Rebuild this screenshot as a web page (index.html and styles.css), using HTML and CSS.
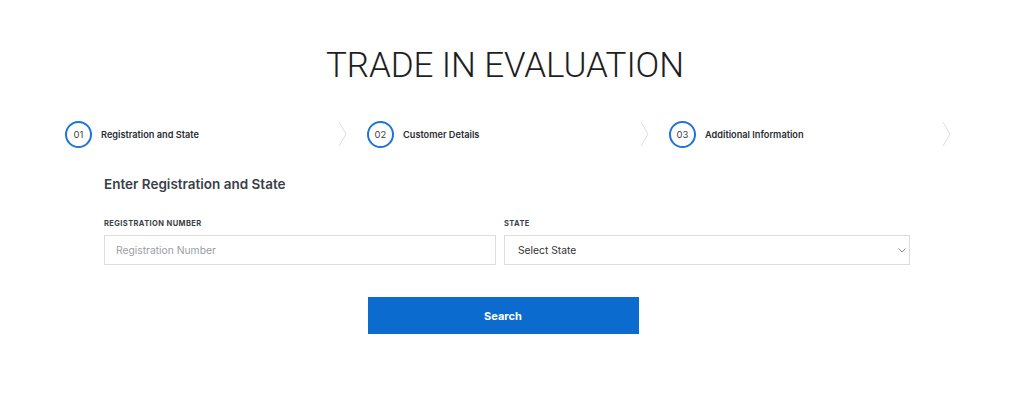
FILE: index.html
```html
<!DOCTYPE html>
<html lang="en">
<head>
    <meta charset="UTF-8">
    <meta name="viewport" content="width=device-width, initial-scale=1.0">
    <title>Trade In Evaluation</title>
    <link rel="stylesheet" href="styles.css">
</head>
<body>
    <div class="page">
        <h1 class="title">TRADE IN EVALUATION</h1>

        <div class="steps">
            <div class="step">
                <span class="step-num">01</span>
                <span class="step-label">Registration and State</span>
                <svg class="chevron" width="9" height="26" viewBox="0 0 9 26"><path d="M1 1 L8 13 L1 25" fill="none" stroke="#dedede" stroke-width="1"/></svg>
            </div>
            <div class="step">
                <span class="step-num">02</span>
                <span class="step-label">Customer Details</span>
                <svg class="chevron" width="9" height="26" viewBox="0 0 9 26"><path d="M1 1 L8 13 L1 25" fill="none" stroke="#dedede" stroke-width="1"/></svg>
            </div>
            <div class="step">
                <span class="step-num">03</span>
                <span class="step-label">Additional Information</span>
                <svg class="chevron" width="9" height="26" viewBox="0 0 9 26"><path d="M1 1 L8 13 L1 25" fill="none" stroke="#dedede" stroke-width="1"/></svg>
            </div>
        </div>

        <form class="form" onsubmit="return false">
            <h3 class="form-title">Enter Registration and State</h3>
            <div class="fields">
                <div class="field">
                    <label for="rego">REGISTRATION NUMBER</label>
                    <input id="rego" type="text" placeholder="Registration Number">
                </div>
                <div class="field">
                    <label for="state">STATE</label>
                    <div class="select-wrap">
                        <select id="state">
                            <option>Select State</option>
                            <option>ACT</option>
                            <option>NSW</option>
                            <option>NT</option>
                            <option>QLD</option>
                            <option>SA</option>
                            <option>TAS</option>
                            <option>VIC</option>
                            <option>WA</option>
                        </select>
                        <svg class="caret" width="8" height="5" viewBox="0 0 8 5"><path d="M0.5 0.5 L4 4 L7.5 0.5" fill="none" stroke="#888" stroke-width="1"/></svg>
                    </div>
                </div>
            </div>
            <div class="actions">
                <button type="submit" class="btn">Search</button>
            </div>
        </form>
    </div>
</body>
</html>
```

FILE: styles.css
```css
body {
    margin: 0;
    font-family: Inter, "Liberation Sans", Arial, sans-serif;
    color: #2b2f36;
    background: #fff;
}
.page {
    width: 906px;
    margin-left: 52px;
}
.title {
    margin: 0;
    padding-top: 45px;
    text-align: center;
    font-family: Roboto, Inter, sans-serif;
    font-weight: 300;
    font-size: 35px;
    line-height: 41px;
    letter-spacing: -0.1px;
    color: #1e1e1e;
}
.steps {
    display: grid;
    grid-template-columns: repeat(3, 1fr);
    margin-top: 34px;
}
.step {
    display: flex;
    align-items: center;
    height: 28px;
    padding: 0 7px 0 13px;
}
.step-num {
    box-sizing: border-box;
    width: 27px;
    height: 27px;
    border: 2px solid #1f74d6;
    border-radius: 50%;
    display: flex;
    align-items: center;
    justify-content: center;
    font-size: 9.5px;
    color: #444;
}
.step-label {
    margin-left: 9px;
    font-size: 9.2px;
    font-weight: 600;
    color: #2a2d33;
    flex: 1;
}
.chevron {
    display: block;
}
.form {
    width: 806px;
    margin: 0 0 0 52px;
}
.form-title {
    margin: 26px 0 0;
    font-size: 13.5px;
    font-weight: 600;
    line-height: 20px;
    color: #3a3f48;
}
.fields {
    display: grid;
    grid-template-columns: 392px 1fr;
    gap: 8px;
    margin-top: 25px;
}
.field label {
    display: block;
    font-size: 7.5px;
    font-weight: 700;
    letter-spacing: 0.4px;
    color: #3a3f48;
    margin-bottom: 7px;
}
.field input,
.field select {
    box-sizing: border-box;
    width: 100%;
    height: 30px;
    border: 1px solid #dcdcdc;
    border-radius: 0;
    background: #fff;
    font-family: inherit;
    font-size: 10.3px;
    padding: 0 11px;
    outline: none;
}
.field input::placeholder {
    color: #9a9ea5;
}
.field select {
    -webkit-appearance: none;
    appearance: none;
    color: #333;
    padding-left: 13px;
}
.select-wrap {
    position: relative;
}
.caret {
    position: absolute;
    right: 4px;
    top: 13px;
    pointer-events: none;
}
.actions {
    display: flex;
    justify-content: center;
    margin-top: 32px;
    padding-right: 8px;
}
.btn {
    width: 271px;
    height: 37px;
    border: 0;
    background: #0b6bcf;
    color: #fff;
    font-family: inherit;
    font-size: 11px;
    font-weight: 700;
    cursor: pointer;
}
```
